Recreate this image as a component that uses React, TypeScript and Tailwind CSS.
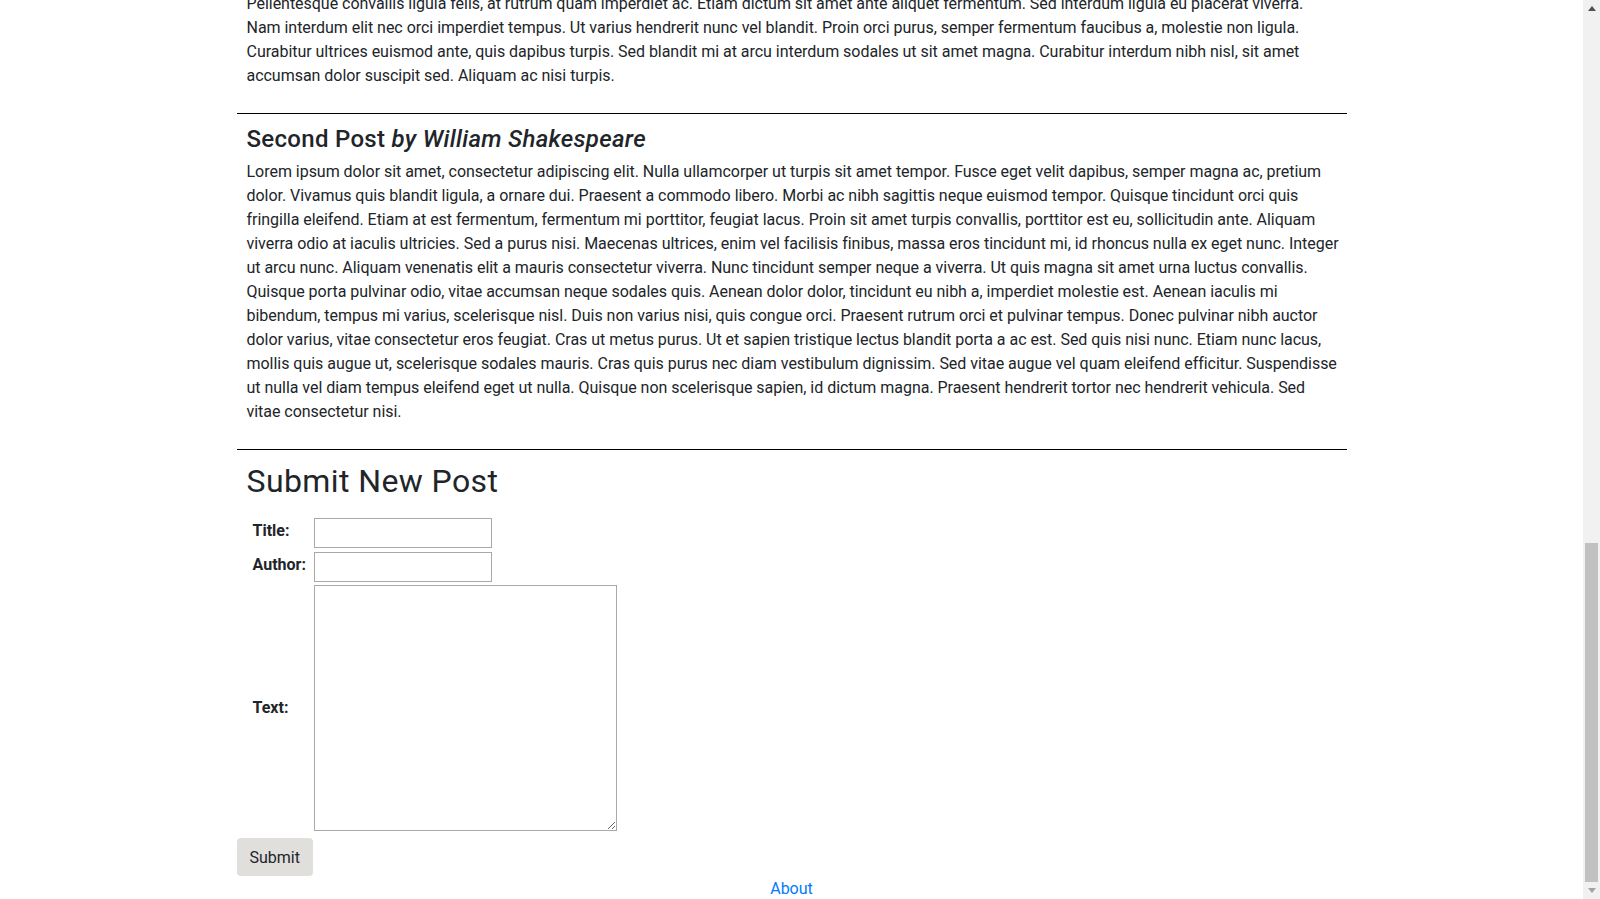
import React from "react";

const post1 = [
  "Pellentesque convallis ligula felis, at rutrum quam imperdiet ac. Etiam dictum sit amet ante aliquet fermentum. Sed interdum ligula eu placerat viverra.",
  "Nam interdum elit nec orci imperdiet tempus. Ut varius hendrerit nunc vel blandit. Proin orci purus, semper fermentum faucibus a, molestie non ligula.",
  "Curabitur ultrices euismod ante, quis dapibus turpis. Sed blandit mi at arcu interdum sodales ut sit amet magna. Curabitur interdum nibh nisl, sit amet",
  "accumsan dolor suscipit sed. Aliquam ac nisi turpis.",
];

const post2 = [
  "Lorem ipsum dolor sit amet, consectetur adipiscing elit. Nulla ullamcorper ut turpis sit amet tempor. Fusce eget velit dapibus, semper magna ac, pretium",
  "dolor. Vivamus quis blandit ligula, a ornare dui. Praesent a commodo libero. Morbi ac nibh sagittis neque euismod tempor. Quisque tincidunt orci quis",
  "fringilla eleifend. Etiam at est fermentum, fermentum mi porttitor, feugiat lacus. Proin sit amet turpis convallis, porttitor est eu, sollicitudin ante. Aliquam",
  "viverra odio at iaculis ultricies. Sed a purus nisi. Maecenas ultrices, enim vel facilisis finibus, massa eros tincidunt mi, id rhoncus nulla ex eget nunc. Integer",
  "ut arcu nunc. Aliquam venenatis elit a mauris consectetur viverra. Nunc tincidunt semper neque a viverra. Ut quis magna sit amet urna luctus convallis.",
  "Quisque porta pulvinar odio, vitae accumsan neque sodales quis. Aenean dolor dolor, tincidunt eu nibh a, imperdiet molestie est. Aenean iaculis mi",
  "bibendum, tempus mi varius, scelerisque nisl. Duis non varius nisi, quis congue orci. Praesent rutrum orci et pulvinar tempus. Donec pulvinar nibh auctor",
  "dolor varius, vitae consectetur eros feugiat. Cras ut metus purus. Ut et sapien tristique lectus blandit porta a ac est. Sed quis nisi nunc. Etiam nunc lacus,",
  "mollis quis augue ut, scelerisque sodales mauris. Cras quis purus nec diam vestibulum dignissim. Sed vitae augue vel quam eleifend efficitur. Suspendisse",
  "ut nulla vel diam tempus eleifend eget ut nulla. Quisque non scelerisque sapien, id dictum magna. Praesent hendrerit tortor nec hendrerit vehicula. Sed",
  "vitae consectetur nisi.",
];

function Lines({ lines }: { lines: string[] }) {
  return (
    <>
      {lines.map((l, i) => (
        <span key={i} className="block whitespace-nowrap">
          {l}
        </span>
      ))}
    </>
  );
}

export default function App() {
  return (
    <div
      className="flex h-[899px] w-[1600px] overflow-hidden bg-white text-[16px] leading-6 text-[#212529]"
      style={{ fontFamily: "Roboto, 'Liberation Sans', sans-serif" }}
    >
      <div className="flex-1 overflow-hidden">
        <div className="mx-auto mt-[-18px] w-[1140px] px-[15px]">
          <div className="p-[10px]">
            <p className="mb-[15px] tracking-[-0.03px]">
              <Lines lines={post1} />
            </p>
          </div>
          <hr className="border-t border-black" />
          <div className="p-[10px]">
            <h4 className="mt-px mb-[6px] text-[24px] leading-[29px] font-medium tracking-[0.3px]">
              Second Post <i>by William Shakespeare</i>
            </h4>
            <p className="mb-[15px] tracking-[-0.03px]">
              <Lines lines={post2} />
            </p>
          </div>
          <hr className="border-t border-black" />
          <div className="px-[10px] pt-[10px]">
            <h2 className="mt-[2px] mb-[18px] text-[32px] leading-[38px] font-normal tracking-[0.4px]">Submit New Post</h2>
            <div className="ml-[6px] grid grid-cols-[61px_auto] items-center">
              <label className="mb-[5px] font-bold">Title:</label>
              <input type="text" className="h-[30px] w-[178px] border border-[#a9a9a9] bg-white px-[2px]" />
              <label className="mt-1 mb-[5px] font-bold">Author:</label>
              <input type="text" className="mt-1 h-[30px] w-[178px] border border-[#a9a9a9] bg-white px-[2px]" />
              <label className="mt-[3px] mb-px font-bold">Text:</label>
              <textarea className="mt-[3px] h-[246px] w-[303px] resize border border-[#a9a9a9] bg-white" />
            </div>
          </div>
          <button className="mt-[7px] rounded-[4px] border border-transparent bg-[#e0dfdc] px-3 pt-[7px] pb-[5px] text-[16px] leading-6 text-[#212529]">
            Submit
          </button>
        </div>
        <div className="pt-px text-center">
          <a href="#" className="text-[#007bff]">
            About
          </a>
        </div>
      </div>
      <div className="relative flex w-[17px] flex-col bg-[#f1f1f1]">
        <div className="flex h-[17px] items-center justify-center">
          <svg width="8" height="5" viewBox="0 0 8 5" className="mt-[-1px]">
            <polygon points="0,5 8,5 4,0" fill="#505050" />
          </svg>
        </div>
        <div className="flex-1 px-[2px] pt-[526px]">
          <div className="h-full bg-[#c1c1c1]" />
        </div>
        <div className="flex h-[17px] items-center justify-center">
          <svg width="8" height="5" viewBox="0 0 8 5" className="mt-[-1px]">
            <polygon points="0,0 8,0 4,5" fill="#a3a3a3" />
          </svg>
        </div>
      </div>
    </div>
  );
}
